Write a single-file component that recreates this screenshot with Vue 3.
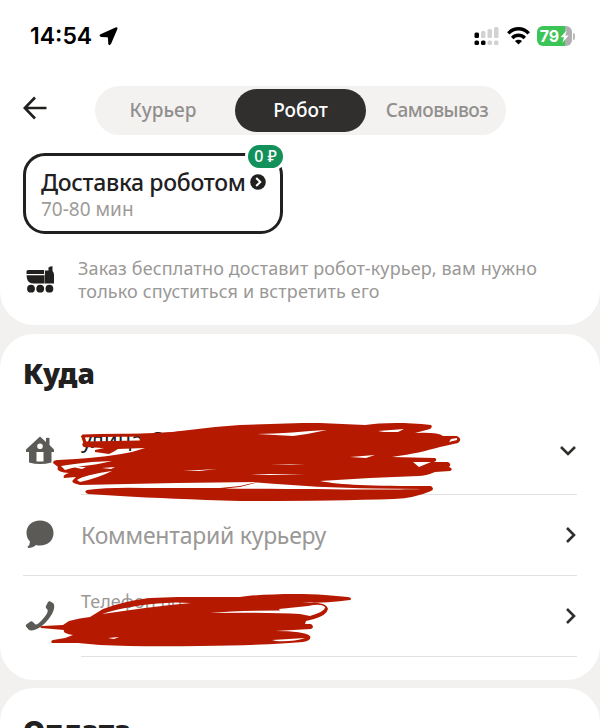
<template>
  <main class="screen">
    <section class="card card-top">
      <!-- Status bar -->
      <div class="status">
        <span class="clock">14:54</span>
        <svg class="location" width="19" height="19" viewBox="0 0 19 19">
          <path d="M16.500 .5Q19 -.2 18.300 2.200L12.200 16.500Q10 19.800 9.200 16.500L9 11.200Q9 10.200 8 10.200L2.200 10Q-.8 9 1.500 7.200Z" fill="#000" />
        </svg>
        <svg class="signal" width="25" height="19" viewBox="0 0 25 19">
          <g fill="#d2d2d2">
            <rect x="7" y="4" width="4.500" height="7" rx="1.500" />
            <rect x="13.500" y="2" width="4.500" height="9" rx="1.500" />
            <rect x="20" y="0" width="4.500" height="11" rx="1.500" />
            <rect x="13.500" y="13.500" width="4.500" height="4.500" rx="1.500" />
            <rect x="20" y="13.500" width="4.500" height="4.500" rx="1.500" />
          </g>
          <rect x="0.500" y="5.500" width="4.500" height="5.500" rx="1.500" />
          <rect x="0.500" y="13.500" width="4.500" height="4.500" rx="1.500" />
          <rect x="7" y="13.500" width="4.500" height="4.500" rx="1.500" />
        </svg>
        <svg class="wifi" width="23" height="18" viewBox="0 0 23 18">
          <g fill="none" stroke="#000" stroke-width="3.500">
            <path d="M1.300 6.400C7 .3 16 .3 21.700 6.400" />
            <path d="M5.200 10.900C8.800 7.300 14.200 7.300 17.800 10.900" />
          </g>
          <path d="M11.500 17.600L7.900 14C10 12.200 13 12.200 15.100 14Z" />
        </svg>
        <div class="battery">
          <span>79</span>
          <svg width="9" height="13" viewBox="0 0 9 13"><path d="M6.800 .3L.5 7.300H4L2.400 12.700L8.700 5.500H5.200Z" fill="#fff" /></svg>
        </div>
        <i class="battery-tip"></i>
      </div>

      <div class="nav">
        <svg class="back" width="25" height="24" viewBox="0 0 25 24">
          <path d="M12 1.500L1.800 12L12 22.500M1.800 12H23.500" fill="none" stroke="#21201f" stroke-width="2.700" />
        </svg>
        <div class="tabs">
          <button
            v-for="tab in tabs"
            :key="tab.id"
            :class="['tab', tab.id, { active: activeTab === tab.id }]"
            @click="activeTab = tab.id"
          >
            <span>{{ tab.label }}</span>
          </button>
        </div>
      </div>

      <div class="option">
        <div class="option-title">
          <span>Доставка роботом</span>
          <svg width="16" height="16" viewBox="0 0 16 16">
            <circle cx="8" cy="8" r="7.800" fill="#21201f" />
            <path d="M6.200 4L10.300 8L6.200 12" fill="none" stroke="#fff" stroke-width="2" />
          </svg>
        </div>
        <div class="option-time">70-80 мин</div>
        <span class="price">0 ₽</span>
      </div>

      <div class="hint">
        <svg width="29" height="27" viewBox="0 0 29 27" fill="#21201f">
          <path d="M2 4H18V8H.5V5.500Q.5 4 2 4ZM.5 9.200H18.500V17.500H8Q2 17.500 1 12.500ZM18.900 4.500H22.500V1.500Q24 .3 26.500 .3V5Q28 6.500 28 9V17.500H18.900Z" />
          <circle cx="5" cy="22.700" r="3.900" />
          <circle cx="14.200" cy="22.700" r="3.900" />
          <circle cx="23.400" cy="22.700" r="3.900" />
        </svg>
        <p>
          <span class="hint-first">Заказ бесплатно доставит робот-курьер, вам нужно</span><br />
          <span class="hint-second">только спуститься и встретить его</span>
        </p>
      </div>
    </section>

    <section class="card card-where">
      <h2 class="where-title">Куда</h2>

      <div class="row place">
        <svg class="row-icon" width="30" height="30" viewBox="0 0 30 30">
          <path fill-rule="evenodd" fill="#5c5a57" d="M15 1.500L21 7V3Q23 2.500 24.500 3V10L29 14.500V17H26.500V27.500Q15 30.500 4 27.500V17H1V14.500ZM15 8.500A2.800 2.800 0 1 0 15 14.100A2.800 2.800 0 1 0 15 8.500ZM11.500 17V26.500H18.500V17Z" />
        </svg>
        <div class="row-body">
          <span class="address">улица С</span>
          <svg class="chevron down" width="18" height="12" viewBox="0 0 18 12"><path d="M2 2L9 9L16 2" /></svg>
        </div>
        <svg class="scribble" width="420" height="90" viewBox="50 416 420 90">
          <path class="line" d="M83 436C120 434 145 437 180 433M83 436L85 443M84 445C110 443 128 448 180 445" />
          <path class="ink" d="M140 434L172 432L215 427L240 425C270 424 290 423 320 423L365 425C380 423 402 422 431 425Q433 427 430 429L415 433Q438 432 443 436L457 436Q463 439 458 443L440 447C425 451 414 454 392 457L435 458Q438 460 434 462L448 462Q452 464 449 467Q454 469 450 471L435 472Q426 476 418 476L370 478L320 481C340 485 370 486 431 486Q435 489 431 491Q415 498 394 499Q330 501 240 501Q170 499 120 496L88 494Q83 492 87 490Q110 487 145 488L220 488L240 486L257 482L176 483L80 485Q70 483 73 480L76 477L64 478Q62 475 69 473Q55 472 58 467L53 463Q53 460 58 460L76 459Q108 457 132 452L145 448L118 449L113 452L109 454L95 452V450L104 448L84 447Q81 444 84 441.500L140 440.500Z" />
          <g class="gap">
            <path d="M61 466Q73 464 92 462L112 461Q96 465 83 466L72 468L65 470ZM77 480Q84 475 112 471Q98 478 80 482ZM73 467L86 467L82 469ZM102 468L115 467L111 469ZM183 471L217 469L199 471ZM257 434C280 434 305 431 327 430Q309 434 293 436ZM378 431L404 429L398 432L384 432ZM350 457L375 455L366 458ZM250 474L305 474L270 475ZM270 465L305 464L290 465ZM413 462L431 462L419 467ZM451 439L457 438L457 440L449 442Z" />
            <path d="M240 487L257 482.500C300 486 335 488 376 488.500L421 489C393 490 315 489.500 225 488.500Z" />
          </g>
        </svg>
      </div>

      <div class="row comment">
        <svg class="row-icon" width="30" height="30" viewBox="0 0 30 30">
          <path fill="#5c5a57" d="M15 1.500C23 1.500 28.500 6.500 28.500 14S23 26.500 15 26.500Q12.500 26.500 11 26Q8 29 3 29L2.600 27.800Q5 26 5 22.500Q1.500 19 1.500 14C1.500 6.500 7 1.500 15 1.500Z" />
        </svg>
        <div class="row-body">
          <span class="placeholder">Комментарий курьеру</span>
          <svg class="chevron" width="12" height="18" viewBox="0 0 12 18"><path d="M2 2L9 9L2 16" /></svg>
        </div>
      </div>

      <div class="row phone">
        <svg class="row-icon" width="30" height="30" viewBox="0 0 30 30">
          <path fill="#5c5a57" d="M23 1Q24 0 25.300 .5L28 2Q31 5 27 13Q21 23 13 27.500Q6 31 3.500 28.500L1 25.500Q.5 24.500 1.300 23.500L5.500 20.500Q7 20 8 21L10.500 23.500Q12 24 15 21Q20 16 22 12.500Q23 10 22.500 8.800L21 7Q20.500 6 21 5Z" />
        </svg>
        <div class="row-body">
          <span class="phone-label">Телефон по</span>
          <svg class="chevron" width="12" height="18" viewBox="0 0 12 18"><path d="M2 2L9 9L2 16" /></svg>
        </div>
        <svg class="scribble" width="320" height="60" viewBox="40 590 320 60">
          <path class="ink" fill-rule="evenodd" d="M41 628Q39 626 43 626L63 625L69 621Q80 618 90 617L103 609Q124 601 150 598L178 597L240 597C260 594 300 593 325 595L348 597Q353 598 350 600Q330 603 302 603Q326 601 328 609Q327 615 314 619L306 621L305 624L311 624Q315 627 311 629L275 631Q304 631 310 636Q312 640 303 642Q270 645 200 646Q140 647 100 645L78 643L52 643Q50 641 53 640L65 638L73 635Q62 633 64 630ZM102 614Q132 604 176 602.500L191 603Q168 605 145 608ZM210 613Q240 610.500 280 610.500L279 609L308 606Q321 603 325 607Q326 611 310 616L300 614Q270 612 210 613ZM108 638L119 637L114 639ZM272 640L305 638Q293 642 276 641Z" />
        </svg>
      </div>
    </section>

    <section class="card card-pay">
      <h2 class="pay-title">Оплата</h2>
    </section>
  </main>
</template>

<script setup>
import { ref } from "vue";

// Delivery methods
const tabs = [
  { id: "courier", label: "Курьер" },
  { id: "robot", label: "Робот" },
  { id: "pickup", label: "Самовывоз" },
];

const activeTab = ref("robot");
</script>

<style>
body {
  margin: 0;
  background: #f2f1f0;
}
</style>

<style scoped>
.screen {
  box-sizing: border-box;
  width: 600px;
  height: 728px;
  overflow: hidden;
  display: flex;
  flex-direction: column;
  gap: 9px;
  background: #f2f1f0;
  color: #21201f;
  font-family: "Noto Sans", "Open Sans", sans-serif;
}

svg {
  display: block;
  flex-shrink: 0;
}

.card {
  box-sizing: border-box;
  flex-shrink: 0;
  background: #fff;
  border-radius: 34px;
}

.card-top {
  height: 325px;
  border-radius: 0 0 34px 34px;
}

/* Status bar */
.status {
  box-sizing: border-box;
  height: 72px;
  padding: 0 26px 0 30px;
  display: flex;
  align-items: center;
}

.clock {
  width: 69px;
  font-family: Inter, sans-serif;
  font-size: 23px;
  font-weight: 600;
  color: #000;
}

.signal {
  margin-left: auto;
}

.wifi {
  margin: 0 7px 0 8px;
}

.battery {
  width: 35px;
  height: 20px;
  border-radius: 6px;
  display: flex;
  align-items: center;
  justify-content: center;
  gap: 1px;
  background: linear-gradient(90deg, #3cc456 79%, #b0aeb0 79%);
  color: #fff;
  font: 700 16px Inter, sans-serif;
}

.battery-tip {
  width: 2px;
  height: 7px;
  margin: 0 -1px 0 1px;
  border-radius: 0 3px 3px 0;
  background: #b9b9b9;
}

/* Back button and tabs */
.nav {
  height: 75px;
  box-sizing: border-box;
  padding: 14px 0 0 23px;
  display: flex;
}

.back {
  margin-top: 10px;
}

.tabs {
  box-sizing: border-box;
  width: 411px;
  height: 49px;
  margin-left: 47px;
  padding: 3px 0;
  display: flex;
  border-radius: 25px;
  background: #f3f2f1;
}

.tab {
  padding: 0 0 2px;
  border: none;
  border-radius: 22px;
  background: none;
  color: #918f8d;
  font-family: inherit;
  font-size: 19px;
  font-weight: 500;
}

.courier {
  width: 140px;
  padding-right: 4px;
}

.robot {
  width: 131px;
}

.pickup {
  width: 140px;
  padding-left: 2px;
  letter-spacing: -0.5px;
}

.tab.active {
  background: #302f2d;
  color: #fff;
}

/* Delivery option */
.option {
  position: relative;
  box-sizing: border-box;
  width: 260px;
  height: 81px;
  margin: 6px 0 0 23px;
  padding: 12px 0 0 15px;
  border: 3px solid #21201f;
  border-radius: 22px;
}

.option-title {
  height: 28px;
  display: flex;
  align-items: center;
  gap: 4px;
  font-size: 23px;
  font-weight: 500;
  line-height: 28px;
  letter-spacing: -0.3px;
  white-space: nowrap;
}

.option-time {
  margin-top: 1px;
  font-size: 19px;
  line-height: 24px;
  color: #9e9b98;
}

.price {
  position: absolute;
  top: -14px;
  right: -6px;
  width: 35px;
  height: 23px;
  border: 3px solid #fff;
  border-radius: 15px;
  background: #12915a;
  color: #fff;
  font-size: 16px;
  font-weight: 500;
  line-height: 23px;
  text-align: center;
}

/* Robot hint */
.hint {
  display: flex;
  padding: 23px 0 0 26px;
}

.hint svg {
  margin-top: 9px;
}

.hint p {
  margin: 0 0 0 23px;
  font-size: 18px;
  line-height: 23px;
  letter-spacing: 0.13px;
  color: #9a9896;
  white-space: nowrap;
}

/* Address card */
.card-where {
  height: 346px;
  padding: 0 23px;
}

h2 {
  margin: 0;
  font-size: 28px;
  font-weight: 900;
  line-height: 40px;
}

.where-title {
  height: 61px;
  padding-top: 19px;
}

.row {
  position: relative;
  height: 81px;
  display: flex;
}

.row-icon {
  margin: 24px 0 0 2px;
}

.place .row-icon {
  margin-top: 21px;
}

.row-body {
  box-sizing: border-box;
  flex: 1;
  margin-left: 26px;
  display: flex;
  align-items: center;
  justify-content: space-between;
  border-bottom: 1px solid #e2e1e0;
  white-space: nowrap;
}

.place .chevron {
  margin-top: -6px;
}

.comment {
  border-bottom: 1px solid #e2e1e0;
  box-sizing: border-box;
}

.comment .row-body {
  border: none;
}

.address {
  align-self: flex-start;
  margin-top: 10px;
  font-size: 22px;
  line-height: 31px;
}

.placeholder {
  font-size: 23px;
  letter-spacing: -0.25px;
  color: #9a9896;
}

.phone .row-icon {
  margin-top: 25px;
}

.phone-label {
  align-self: flex-start;
  margin-top: 13px;
  font-size: 18px;
  line-height: 25px;
  color: #9a9896;
}

.chevron path {
  fill: none;
  stroke: #302f2d;
  stroke-width: 2.6;
}

/* Marker strokes over the private data */
.scribble {
  position: absolute;
  top: 2px;
  left: 27px;
}

.phone .scribble {
  top: 14px;
  left: 17px;
}

.ink {
  fill: #b51a00;
}

.line {
  fill: none;
  stroke: #b51a00;
  stroke-width: 3;
  stroke-linecap: round;
}

.gap {
  fill: #fff;
}

.card-pay {
  height: 90px;
  margin-top: -1px;
  padding: 22px 23px;
}
</style>
